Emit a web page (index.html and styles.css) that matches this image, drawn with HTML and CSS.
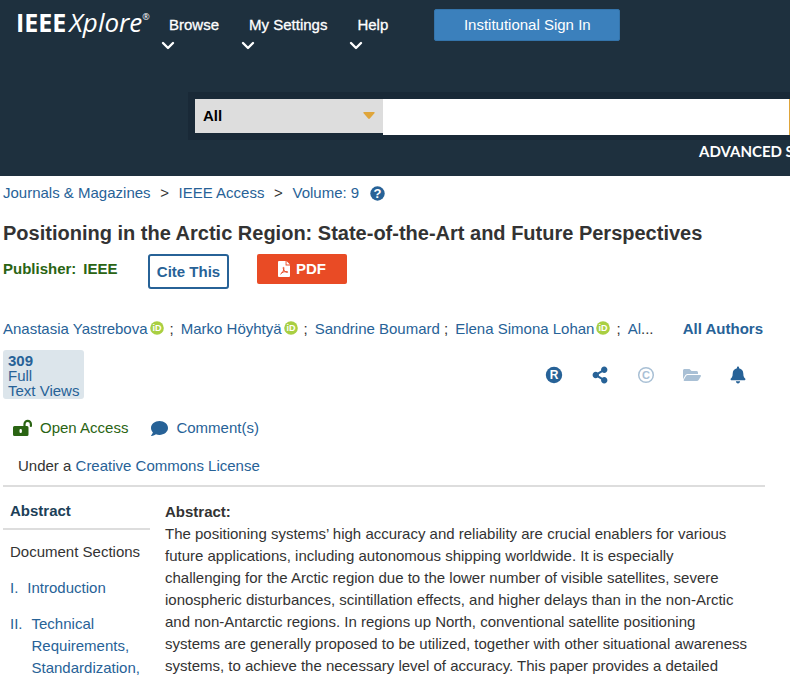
FILE: index.html
```html
<!DOCTYPE html>
<html lang="en">
<head>
<meta charset="utf-8">
<meta name="viewport" content="width=device-width, initial-scale=1">
<title>Positioning in the Arctic Region: State-of-the-Art and Future Perspectives</title>
<link rel="stylesheet" href="styles.css">
</head>
<body>
<svg class="defs" aria-hidden="true">
  <symbol id="chevron" viewBox="0 0 14 10"><path d="M2 2l5 5 5-5" fill="none" stroke="currentColor" stroke-width="2.4" stroke-linecap="round" stroke-linejoin="round"/></symbol>
  <symbol id="orcid" viewBox="0 0 14 14"><circle cx="7" cy="7" r="6.800" fill="#a9cf42"/><text x="7" y="10.4" text-anchor="middle" class="orcid-text">iD</text></symbol>
</svg>
<header class="header">
  <div class="topbar">
    <a class="logo" href="#"><b>IEEE</b><i>Xplore</i><sup>®</sup></a>
    <nav>
      <ul class="menu">
        <li><a href="#">Browse<svg class="chevron"><use href="#chevron"/></svg></a></li>
        <li><a href="#">My Settings<svg class="chevron"><use href="#chevron"/></svg></a></li>
        <li><a href="#">Help<svg class="chevron"><use href="#chevron"/></svg></a></li>
      </ul>
    </nav>
    <button class="signin" type="button">Institutional Sign In</button>
  </div>
  <form class="search">
    <div class="scope">
      <select aria-label="Search scope"><option>All</option></select>
      <svg class="caret" viewBox="0 0 12 8" aria-hidden="true"><path d="M1 0h10q1 0 .6 1L6.8 6.6q-.8.8-1.6 0L.4 1Q0 0 1 0z" fill="#dfa53a"/></svg>
    </div>
    <input type="search" aria-label="Search term">
  </form>
  <div class="advanced"><a href="#">ADVANCED SEARCH</a></div>
</header>

<main class="page">
  <nav class="crumbs">
    <a href="#">Journals &amp; Magazines</a><span>&gt;</span><a href="#">IEEE Access</a><span>&gt;</span><a href="#">Volume: 9</a>
    <svg class="help" viewBox="0 0 15 15" aria-hidden="true"><circle cx="7.5" cy="7.5" r="7.2" fill="#276297"/><text x="7.5" y="12" text-anchor="middle" class="help-text">?</text></svg>
  </nav>

  <h1>Positioning in the Arctic Region: State-of-the-Art and Future Perspectives</h1>

  <div class="actions">
    <div class="publisher"><span>Publisher:</span><span>IEEE</span></div>
    <button class="cite" type="button">Cite This</button>
    <a class="pdf" href="#"><svg viewBox="0 0 12 16" aria-hidden="true"><path d="M1 0h6.6v4.4H12V15q0 1-1 1H1q-1 0-1-1V1q0-1 1-1zM8.5 0L12 3.5H8.5z" fill="#fff"/><path d="M2.4 13.2c1.800-.7 3.700-4 3.500-6.400-.2-1.200-1-.4-.6.8.5 2 2 3.700 3.900 3.800.9 0 .7-.9-.4-.9-2 0-3.900.5-5.300 1.200" fill="none" stroke="#e94b25"/></svg>PDF</a>
  </div>

  <div class="authors">
    <div class="names">
      <span><a href="#">Anastasia Yastrebova</a><svg class="orcid"><use href="#orcid"/></svg><em>;</em></span>
      <span><a href="#">Marko Höyhtyä</a><svg class="orcid"><use href="#orcid"/></svg><em>;</em></span>
      <span><a href="#">Sandrine Boumard</a> ;</span>
      <span><a href="#">Elena Simona Lohan</a><svg class="orcid"><use href="#orcid"/></svg><em>;</em></span>
      <span><a href="#">Al</a>...</span>
    </div>
    <a class="all-authors" href="#">All Authors</a>
  </div>

  <div class="stats">
    <a class="views" href="#"><b>309</b><span>Full</span><span>Text Views</span></a>
    <div class="tools">
      <a href="#" aria-label="References"><svg viewBox="0 0 18 18"><circle cx="9" cy="9" r="8.200" fill="currentColor"/><text x="9" y="13" text-anchor="middle" class="r-text">R</text></svg></a>
      <a href="#" aria-label="Share"><svg viewBox="-16 -16 480 544"><path fill="currentColor" d="M352 320c-22.608 0-43.387 7.819-59.79 20.895l-102.486-64.054a96.551 96.551 0 0 0 0-41.683l102.486-64.054C308.613 184.181 329.392 192 352 192c53.019 0 96-42.981 96-96S405.019 0 352 0s-96 42.981-96 96c0 7.158.79 14.13 2.276 20.841L155.79 180.895C139.387 167.819 118.608 160 96 160c-53.019 0-96 42.981-96 96s42.981 96 96 96c22.608 0 43.387-7.819 59.79-20.895l102.486 64.054A96.301 96.301 0 0 0 256 416c0 53.019 42.981 96 96 96s96-42.981 96-96-42.981-96-96-96z"/></svg></a>
      <a class="muted" href="#" aria-label="Permissions"><svg viewBox="0 0 18 18"><circle cx="9" cy="9" r="7.300" fill="none" stroke="currentColor" stroke-width="1.500"/><text x="9" y="13" text-anchor="middle" class="c-text">C</text></svg></a>
      <a class="muted" href="#" aria-label="Save"><svg viewBox="0 0 576 512"><path fill="currentColor" d="M572.694 292.093L500.27 416.248A63.997 63.997 0 0 1 444.989 448H45.025c-18.523 0-30.064-20.093-20.731-36.093l72.424-124.155A64 64 0 0 1 152 256h399.964c18.523 0 30.064 20.093 20.73 36.093zM152 224h328v-48c0-26.51-21.49-48-48-48H272l-64-64H48C21.49 64 0 85.49 0 112v278.046l69.077-118.418C86.214 242.25 117.989 224 152 224z"/></svg></a>
      <a href="#" aria-label="Alerts"><svg viewBox="-16 -16 480 544"><path fill="currentColor" d="M224 512c35.320 0 63.970-28.650 63.970-64H160.030c0 35.350 28.650 64 63.970 64zm215.390-149.710c-19.320-20.760-55.470-51.990-55.470-154.290 0-77.700-54.480-139.900-127.940-155.160V32c0-17.670-14.320-32-31.980-32s-31.980 14.330-31.980 32v20.840C118.560 68.100 64.080 130.300 64.080 208c0 102.300-36.150 133.530-55.470 154.290-6 6.450-8.660 14.160-8.610 21.710.11 16.400 12.980 32 32.100 32h383.800c19.120 0 32-15.600 32.100-32 .05-7.550-2.610-15.270-8.610-21.710z"/></svg></a>
    </div>
  </div>

  <div class="access">
    <span class="open"><svg viewBox="0 0 19 18" aria-hidden="true"><path d="M11.500 8V5a3.200 3.200 0 0 1 6.400 0v2" fill="none" stroke="currentColor" stroke-width="2.200" stroke-linecap="round"/><path fill="currentColor" fill-rule="evenodd" d="M1.500 7h12.500q1.500 0 1.500 1.500v7q0 1.500-1.500 1.500H1.500Q0 17 0 15.500v-7q0-1.500 1.500-1.500zM7.700 10a1.200 1.200 0 0 0-1.200 1.200v1.600a1.200 1.200 0 0 0 2.400 0v-1.600a1.200 1.200 0 0 0-1.200-1.200z"/></svg>Open Access</span>
    <a class="comments" href="#"><svg viewBox="0 16 512 480" aria-hidden="true"><path fill="currentColor" d="M256 32C114.600 32 0 125.100 0 240c0 49.600 21.400 95 57 130.700C44.500 421.100 2.700 466 2.200 466.500c-2.200 2.300-2.800 5.700-1.500 8.700S4.800 480 8 480c66.300 0 116-31.800 140.600-51.400 32.700 12.300 69 19.400 107.400 19.400 141.400 0 256-93.100 256-208S397.400 32 256 32z"/></svg>Comment(s)</a>
  </div>
  <p class="license">Under a <a href="#">Creative Commons License</a></p>

  <div class="content">
    <aside class="sidebar">
      <h2><a href="#">Abstract</a></h2>
      <p>Document Sections</p>
      <ul>
        <li><a href="#"><span>I.</span><span>Introduction</span></a></li>
        <li><a href="#"><span>II.</span><span>Technical Requirements, Standardization,</span></a></li>
      </ul>
    </aside>
    <section class="abstract">
      <h2>Abstract:</h2>
      <p>The positioning systems’ high accuracy and reliability are crucial enablers for various future applications, including autonomous shipping worldwide. It is especially challenging for the Arctic region due to the lower number of visible satellites, severe ionospheric disturbances, scintillation effects, and higher delays than in the non-Arctic and non-Antarctic regions. In regions up North, conventional satellite positioning systems are generally proposed to be utilized, together with other situational awareness systems, to achieve the necessary level of accuracy. This paper provides a detailed</p>
    </section>
  </div>
</main>
</body>
</html>
```

FILE: styles.css
```css
* { box-sizing: border-box; }
body {
  margin: 0;
  background: #fff;
  color: #333;
  font: 15px/22px "Liberation Sans", Arial, sans-serif;
}
a { color: #276297; text-decoration: none; }
h1, h2, p, ul { margin: 0; padding: 0; }
ul { list-style: none; }
svg { display: block; flex: none; }
button, select, input { font: inherit; }
.defs { position: absolute; width: 0; height: 0; }

.header {
  background: #1e303e;
  height: 176px;
  overflow: hidden;
}
.topbar {
  display: flex;
  align-items: flex-start;
  height: 92px;
  padding: 9px 16px 0;
}
.logo {
  display: flex;
  width: 146px;
  color: #fff;
  font: 26px/26px "Open Sans", sans-serif;
}
.logo b { font-size: 25px; margin-right: 3px; }
.logo sup { font-size: 9px; line-height: 16px; }
.menu { display: flex; gap: 23px; }
.menu a {
  display: block;
  padding: 5px 0 0 7px;
  color: #fff;
  -webkit-text-stroke: 0.3px #fff;
}
.chevron { width: 14px; height: 10px; margin: 5px 0 0 -8px; }
.signin {
  width: 186px;
  height: 32px;
  margin-left: 46px;
  border: 1px solid #3474ab;
  border-radius: 2px;
  background: #3b80bc;
  color: #fff;
}
.search {
  display: flex;
  align-items: flex-start;
  margin-left: 188px;
  padding: 7px 0 5px 7px;
  background: #192937;
}
.scope { position: relative; width: 188px; }
.scope select {
  display: block;
  width: 100%;
  height: 34px;
  padding: 0 8px;
  border: 0;
  border-radius: 0;
  background: #ddd;
  color: #000;
  font-weight: bold;
  appearance: none;
}
.caret { position: absolute; right: 8px; top: 13px; width: 12px; height: 8px; }
.search input {
  flex: 1;
  min-width: 0;
  height: 36px;
  padding: 0 8px;
  border: 0;
  border-right: 1px solid #dfa53a;
  border-radius: 0;
  background: #fff;
  appearance: none;
}
.advanced { padding-left: 699px; white-space: nowrap; }
.advanced a { color: #fff; font: bold 15px/22px Lato, sans-serif; }

.page { padding: 6px 25px 0 3px; }
.crumbs { display: flex; align-items: center; }
.crumbs span { width: 28px; text-align: center; }
.help { width: 15px; height: 15px; margin-left: 11px; }
.help-text { fill: #fff; font: bold 13px "Liberation Sans", sans-serif; }
h1 { margin-top: 16px; font-size: 20px; line-height: 26px; }

.actions { display: flex; align-items: flex-start; margin-top: 8px; height: 64px; font-weight: bold; }
.publisher { display: flex; gap: 7px; width: 145px; padding-top: 4px; color: #2a6413; }
.cite {
  width: 81px;
  height: 35px;
  padding: 0;
  border: 2px solid #276297;
  border-radius: 3px;
  background: #fff;
  color: #276297;
  font-weight: bold;
}
.pdf {
  display: flex;
  align-items: center;
  justify-content: center;
  gap: 6px;
  width: 90px;
  height: 30px;
  margin-left: 28px;
  border-radius: 2px;
  background: #e94b25;
  color: #fff;
}
.pdf svg { width: 12px; height: 16px; }

.authors { display: flex; justify-content: space-between; height: 32px; }
.names { display: flex; gap: 7px; white-space: nowrap; }
.names span { display: flex; white-space: pre; }
.names em { margin-left: 6px; font-style: normal; }
.orcid { width: 14px; height: 14px; margin: 3px 0 0 2px; }
.orcid-text { fill: #fff; font: bold 9px "Liberation Sans", sans-serif; }
.all-authors { font-weight: bold; padding-right: 2px; }

.stats { display: flex; justify-content: space-between; align-items: center; }
.views {
  display: flex;
  flex-direction: column;
  padding: 3px 5px 1px;
  border-radius: 3px;
  background: #dce5eb;
  line-height: 15px;
}
.tools { display: flex; gap: 28px; padding-right: 18px; }
.tools svg { width: 18px; height: 18px; }
.muted { color: #a9c0d5; }
.r-text { fill: #fff; font: bold 12px "Liberation Sans", sans-serif; }
.c-text { fill: currentColor; font: bold 11px "Liberation Sans", sans-serif; }

.access { display: flex; gap: 23px; margin-top: 18px; padding-left: 10px; }
.open, .comments { display: flex; align-items: center; gap: 8px; }
.open { color: #2a6413; }
.open svg { width: 19px; height: 18px; }
.comments svg { width: 17px; height: 17px; }
.license { padding: 16px 15px 8px; border-bottom: 2px solid #ddd; }

.content { display: flex; gap: 15px; }
.sidebar { width: 147px; flex: none; padding-top: 13px; }
.sidebar h2 { padding: 0 7px 6px; border-bottom: 2px solid #ddd; font-size: 15px; }
.sidebar h2 a { color: #1c4058; }
.sidebar p { padding: 11px 7px 0; }
.sidebar li { padding: 14px 0 0 7px; }
.sidebar li a { display: flex; gap: 9px; }
.abstract { flex: 1; padding: 14px 15px 0 0; }
.abstract h2 { font-size: 15px; }
```
